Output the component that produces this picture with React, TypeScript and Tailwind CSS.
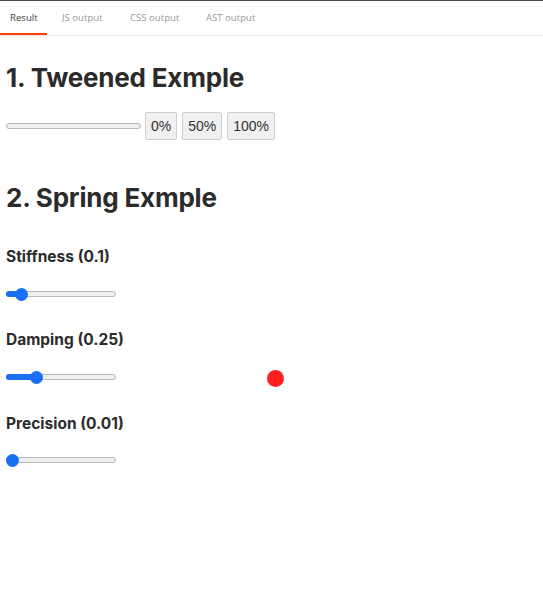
import React from 'react';

const tabs = [
  { label: 'Result', w: 'w-[47px]', active: true },
  { label: 'JS output', w: 'w-[68px]', active: false },
  { label: 'CSS output', w: 'w-[76px]', active: false },
  { label: 'AST output', w: 'w-[74px]', active: false },
];

const Slider: React.FC<{ value: number; min: number; max: number }> = ({ value, min, max }) => {
  const pct = (value - min) / (max - min);
  const thumbX = 6.5 + pct * (110 - 13);
  return (
    <div className="relative h-4 w-[110px]">
      <div className="absolute left-0 right-0 top-[5px] h-[6px] rounded-full border border-[#b8b8b8] bg-[#efefef]" />
      <div
        className="absolute left-0 top-[5px] h-[6px] rounded-l-full bg-[#1a6ff3]"
        style={{ width: thumbX }}
      />
      <div
        className="absolute top-[1.5px] h-[13px] w-[13px] rounded-full bg-[#1a6ff3]"
        style={{ left: thumbX - 6.5 }}
      />
    </div>
  );
};

export default function App() {
  return (
    <div className="relative h-[598px] w-[543px] bg-white text-[#2b2b2b]" style={{ fontFamily: 'Inter, "Liberation Sans", sans-serif' }}>
      <div className="h-px bg-[#4b4b55]" />
      {/* Tabs */}
      <div className="flex h-[35px] border-b border-[#ececec]" style={{ fontFamily: '"Open Sans", sans-serif' }}>
        {tabs.map((t, i) => (
          <div
            key={t.label}
            className={`flex items-center ${t.w} ${i === 1 ? 'ml-[3px] pl-[12px]' : i === 0 ? 'pl-[10px]' : 'pl-[12px]'} text-[9.6px] border-b-2 ${
              t.active ? 'border-[#ff3e00] text-[#444]' : 'border-transparent text-[#999]'
            }`}
          >
            <span className="mt-[2px] whitespace-nowrap">{t.label}</span>
          </div>
        ))}
      </div>

      <div className="px-[6px]">
        <h1 className="mt-[25px] text-[26px] font-bold leading-[34px] tracking-[-0.2px]">1. Tweened Exmple</h1>
        <div className="mt-[17px] flex items-center">
          <div className="h-[6px] w-[135px] rounded-full border border-[#b8b8b8] bg-[#efefef]" />
          <div className="ml-[4px] flex gap-[5px]" style={{ fontFamily: '"Liberation Sans", Arial, sans-serif' }}>
            {['0%', '50%', '100%'].map(b => (
              <button
                key={b}
                className="h-[28px] rounded-[2px] border border-[#cfcfcf] bg-[#f0f0f0] px-[5px] text-[14px] text-[#333]"
              >
                {b}
              </button>
            ))}
          </div>
        </div>

        <h2 className="mt-[41px] text-[26px] font-bold leading-[34px] tracking-[-0.2px]">2. Spring Exmple</h2>

        <h3 className="mt-[32px] text-[15.5px] font-bold leading-[20px]">Stiffness (0.1)</h3>
        <div className="mt-[19px]"><Slider value={0.1} min={0.01} max={1} /></div>

        <h3 className="mt-[28px] text-[15.5px] font-bold leading-[20px]">Damping (0.25)</h3>
        <div className="mt-[19px]"><Slider value={0.25} min={0.01} max={1} /></div>

        <h3 className="mt-[29px] text-[15.5px] font-bold leading-[20px]">Precision (0.01)</h3>
        <div className="mt-[18px]"><Slider value={0.01} min={0.01} max={1} /></div>
      </div>

      {/* spring-driven dot */}
      <div className="absolute left-[266.5px] top-[369.5px] h-[17px] w-[17px] rounded-full bg-[#ff1f1f]" />
    </div>
  );
}
